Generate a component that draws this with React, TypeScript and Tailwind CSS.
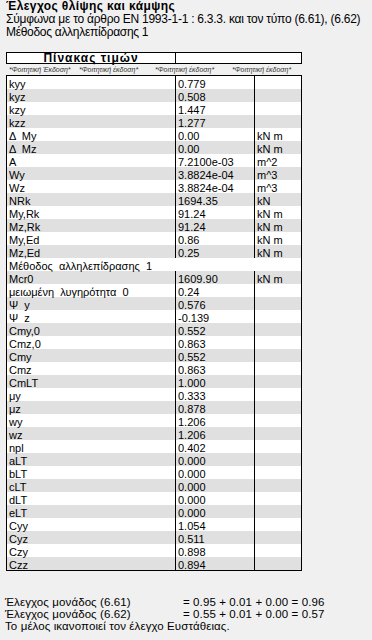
import React from "react";

const rows: [string, string, string][] = [
  ["kyy", "0.779", ""],
  ["kyz", "0.508", ""],
  ["kzy", "1.447", ""],
  ["kzz", "1.277", ""],
  ["Δ  My", "0.00", "kN m"],
  ["Δ  Mz", "0.00", "kN m"],
  ["A", "7.2100e-03", "m^2"],
  ["Wy", "3.8824e-04", "m^3"],
  ["Wz", "3.8824e-04", "m^3"],
  ["NRk", "1694.35", "kN"],
  ["My,Rk", "91.24", "kN m"],
  ["Mz,Rk", "91.24", "kN m"],
  ["My,Ed", "0.86", "kN m"],
  ["Mz,Ed", "0.25", "kN m"],
  ["Μέθοδος  αλληλεπίδρασης  1", "__SPAN__", ""],
  ["Mcr0", "1609.90", "kN m"],
  ["μειωμένη  λυγηρότητα  0", "0.24", ""],
  ["Ψ  y", "0.576", ""],
  ["Ψ  z", "-0.139", ""],
  ["Cmy,0", "0.552", ""],
  ["Cmz,0", "0.863", ""],
  ["Cmy", "0.552", ""],
  ["Cmz", "0.863", ""],
  ["CmLT", "1.000", ""],
  ["μy", "0.333", ""],
  ["μz", "0.878", ""],
  ["wy", "1.206", ""],
  ["wz", "1.206", ""],
  ["npl", "0.402", ""],
  ["aLT", "0.000", ""],
  ["bLT", "0.000", ""],
  ["cLT", "0.000", ""],
  ["dLT", "0.000", ""],
  ["eLT", "0.000", ""],
  ["Cyy", "1.054", ""],
  ["Cyz", "0.511", ""],
  ["Czy", "0.898", ""],
  ["Czz", "0.894", ""],
];

export default function App() {
  return (
    <div
      className="w-[372px] h-[640px] bg-[#f0f0f0] text-black overflow-hidden"
      style={{ fontFamily: '"Liberation Sans", Arial, sans-serif' }}
    >
      <div className="pl-[6px] text-[12px] leading-[13px]">
        <div className="font-bold tracking-[0.4px]">Έλεγχος θλίψης και κάμψης</div>
        <div className="whitespace-nowrap tracking-[-0.25px]">
          Σύμφωνα με το άρθρο EN 1993-1-1 : 6.3.3. και τον τύπο (6.61), (6.62)
        </div>
        <div className="tracking-[-0.3px]">Μέθοδος αλληλεπίδρασης 1</div>
      </div>

      <div className="ml-[6px] mt-[13px] w-[296px]">
        <div className="flex h-[12px] border border-black bg-white">
          <div className="w-[169px] border-r border-black text-center text-[12px] leading-[11px] font-bold underline tracking-[1px]">
            Πίνακας τιμών
          </div>
          <div className="flex-1" />
        </div>
        <div className="flex h-[11px] pl-[3px] text-[7px] leading-[11px] italic text-[#333] whitespace-nowrap overflow-hidden">
          <div className="w-[70px]">*Φοιτητική Έκδοση*</div>
          <div className="w-[76px]">*Φοιτητική έκδοση*</div>
          <div className="w-[77px]">*Φοιτητική έκδοση*</div>
          <div className="w-[70px]">*Φοιτητική έκδοση*</div>
        </div>
        <div className="border border-black text-[11px]">
          {rows.map((r, i) => {
            const bg = i % 2 === 1 ? "bg-[#e0e0e0]" : "bg-white";
            if (r[1] === "__SPAN__") {
              return (
                <div key={i} className={`h-[13px] ${bg} flex`}>
                  <div className="pl-[2px] pt-[2px] leading-[13px] whitespace-pre">
                    {r[0]}
                  </div>
                </div>
              );
            }
            return (
              <div key={i} className={`flex h-[13px] ${bg}`}>
                <div className="w-[169px] shrink-0 border-r border-black pl-[2px] pt-[2px] leading-[13px] whitespace-pre">
                  {r[0]}
                </div>
                <div className="w-[79px] shrink-0 border-r border-black pl-[2px] pt-[2px] leading-[13px]">
                  {r[1]}
                </div>
                <div className="flex-1 pl-[2px] pt-[2px] leading-[13px] whitespace-pre">
                  {r[2]}
                </div>
              </div>
            );
          })}
        </div>
      </div>

      <div className="mt-[25px] pl-[5px] text-[11.5px] leading-[12px] tracking-[0.1px]">
        <div className="flex">
          <div className="w-[178px]">Έλεγχος μονάδος (6.61)</div>
          <div>= 0.95 + 0.01 + 0.00 = 0.96</div>
        </div>
        <div className="flex">
          <div className="w-[178px]">Έλεγχος μονάδος (6.62)</div>
          <div>= 0.55 + 0.01 + 0.00 = 0.57</div>
        </div>
        <div>Το μέλος ικανοποιεί τον έλεγχο Ευστάθειας.</div>
      </div>
    </div>
  );
}
